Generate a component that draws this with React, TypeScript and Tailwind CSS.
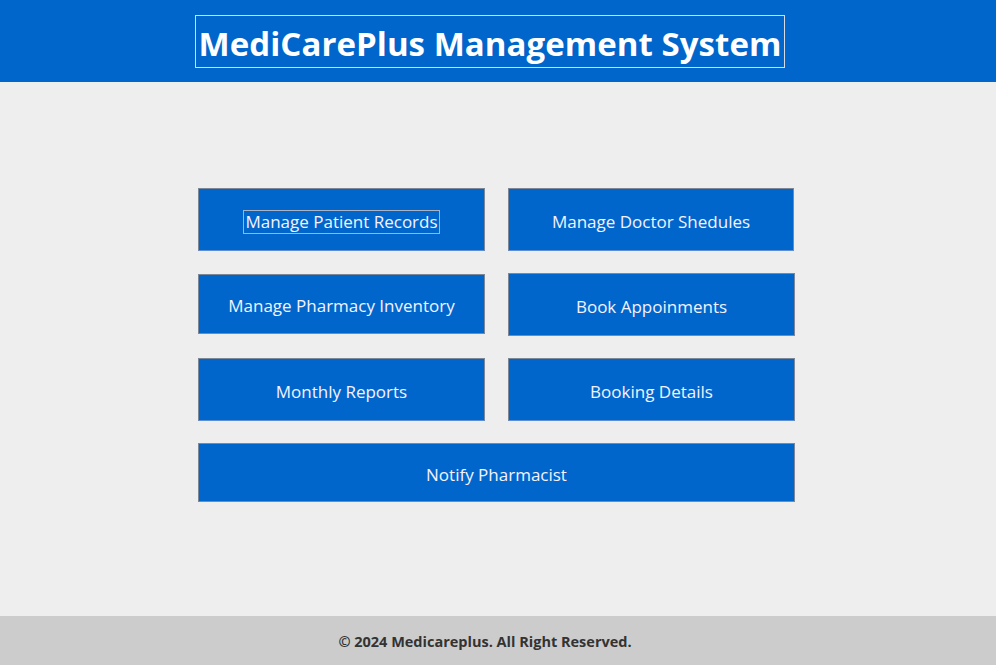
import React from 'react';

const font = { fontFamily: '"Open Sans", "Noto Sans", sans-serif' };

function MenuButton({
  label,
  className = '',
  focused = false,
}: {
  label: string;
  className?: string;
  focused?: boolean;
}) {
  return (
    <button
      className={`flex items-center justify-center pt-[4px] bg-[#0066cc] border border-[#7c8898] border-b-[#5f8fd0] text-[17px] text-[#f4f2ff] ${className}`}
    >
      <span className={focused ? 'border border-[#a9b3c4] px-px leading-[22px]' : 'leading-[22px]'}>
        {label}
      </span>
    </button>
  );
}

export default function App() {
  return (
    <div className="w-[996px] h-[665px] flex flex-col bg-[#eeeeee]" style={font}>
      <header className="h-[82px] bg-[#0066cc] flex items-center justify-center shrink-0">
        <h1 className="-ml-[16px] border border-[#d6dbe6] px-[3px] pt-[5px] h-[53px] flex items-center text-[33px] font-bold text-white tracking-[0.05px]">
          MediCarePlus Management System
        </h1>
      </header>

      <main className="flex-1 pt-[106px] pl-[198px]">
        <div className="w-[597px] flex flex-col gap-[22px]">
          <div className="flex gap-[23px]">
            <MenuButton label="Manage Patient Records" focused className="w-[287px] h-[63px]" />
            <MenuButton label="Manage Doctor Shedules" className="w-[286px] h-[63px]" />
          </div>
          <div className="flex items-start gap-[23px]">
            <MenuButton label="Manage Pharmacy Inventory" className="w-[287px] h-[60px] mt-px" />
            <MenuButton label="Book Appoinments" className="w-[287px] h-[63px]" />
          </div>
          <div className="flex gap-[23px]">
            <MenuButton label="Monthly Reports" className="w-[287px] h-[63px]" />
            <MenuButton label="Booking Details" className="w-[287px] h-[63px]" />
          </div>
          <MenuButton label="Notify Pharmacist" className="w-[597px] h-[59px]" />
        </div>
      </main>

      <footer className="h-[49px] shrink-0 bg-[#cccccc] flex items-center justify-center pt-[2px]">
        <p className="-ml-[26px] text-[14.5px] font-bold text-[#333333]">
          © 2024 Medicareplus. All Right Reserved.
        </p>
      </footer>
    </div>
  );
}
